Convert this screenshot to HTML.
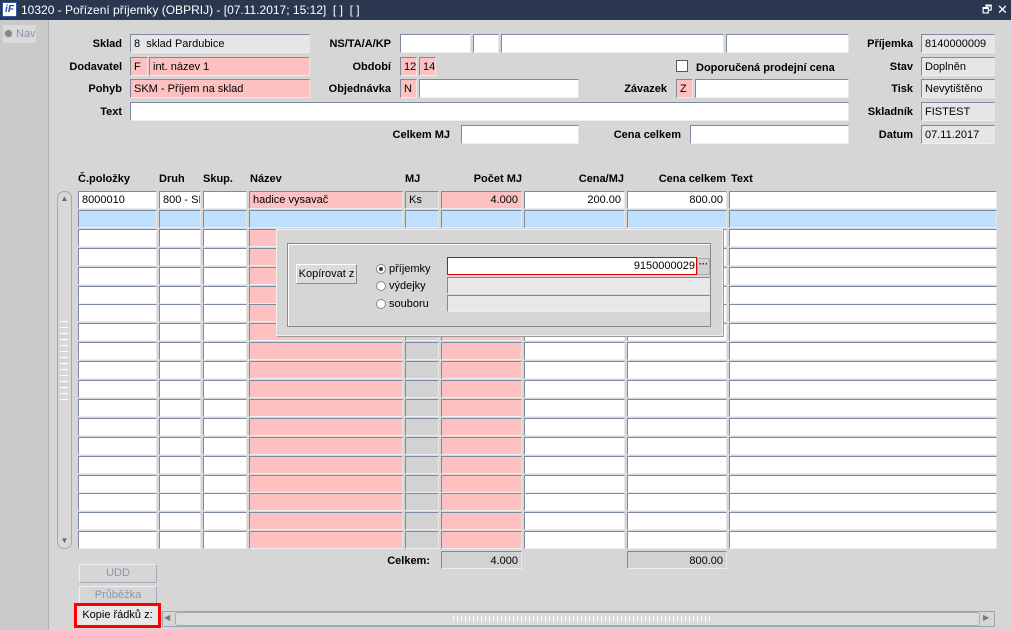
<!DOCTYPE html>
<html><head><meta charset="utf-8"><style>
*{box-sizing:border-box;margin:0;padding:0}
body{width:1011px;height:630px;overflow:hidden;background:#d6d6d6;font-family:"Liberation Sans",Arial,sans-serif;font-size:11px;color:#000;position:relative}
.a{position:absolute}
.t{position:absolute;height:20px;line-height:20px;white-space:nowrap}
.l{font-weight:bold;text-align:right}
.f{position:absolute;height:19px;line-height:18px;padding:0 3px;border:1px solid;border-color:#7d8aa0 #e6e6e6 #eeeeee #7d8aa0;background:#fff;white-space:nowrap;overflow:hidden;font-size:11px}
.g{background:#e6e6e6}.p{background:#fdc1c1}.b{background:#bfdfff}.r{text-align:right}.gr{background:#d2d2d2}
.h{position:absolute;top:172px;font-weight:bold;height:14px;line-height:14px}
</style></head><body>
<div class="a" style="left:0;top:0;width:1011px;height:20px;background:#2a374f"></div>
<div class="a" style="left:2px;top:2px;width:15px;height:15px;background:#fff;border:1px solid #3355aa;color:#1a3fb0;font-weight:bold;font-style:italic;font-size:10px;line-height:13px;text-align:center">iF</div>
<div class="t" style="left:21px;top:0;color:#fff;font-size:12px">10320 - Pořízení příjemky (OBPRIJ) - [07.11.2017; 15:12]&nbsp; [ ]&nbsp; [ ]</div>
<div class="t" style="left:982px;top:0;color:#fff;font-size:11px">🗗</div>
<div class="t" style="left:997px;top:0;color:#fff;font-size:13px">✕</div>
<div class="a" style="left:0;top:20px;width:49px;height:610px;background:#cacaca;border-right:1px solid #a8b0bc"></div>
<div class="a" style="left:3px;top:25px;width:33px;height:18px;background:#dadada"></div>
<div class="a" style="left:4px;top:29px;width:9px;height:9px;border-radius:50%;background:#888;border:1px solid #ccc"></div>
<div class="t" style="left:16px;top:24px;color:#8a94a4">Nav</div>

<div class="t l" style="left:60px;width:62px;top:34px">Sklad</div>
<div class="f g" style="left:130px;top:34px;width:180px">8&nbsp; sklad Pardubice</div>
<div class="t l" style="left:50px;width:72px;top:57px">Dodavatel</div>
<div class="f p" style="left:130px;top:57px;width:18px">F</div>
<div class="f p" style="left:149px;top:57px;width:161px">int. název 1</div>
<div class="t l" style="left:50px;width:72px;top:79px">Pohyb</div>
<div class="f p" style="left:130px;top:79px;width:180px">SKM - Příjem na sklad</div>
<div class="t l" style="left:50px;width:72px;top:102px">Text</div>
<div class="f" style="left:130px;top:102px;width:719px"></div>

<div class="t l" style="left:300px;width:91px;top:34px">NS/TA/A/KP</div>
<div class="f" style="left:400px;top:34px;width:71px"></div>
<div class="f" style="left:473px;top:34px;width:26px"></div>
<div class="f" style="left:501px;top:34px;width:223px"></div>
<div class="f" style="left:726px;top:34px;width:123px"></div>
<div class="t l" style="left:300px;width:91px;top:57px">Období</div>
<div class="f p" style="left:400px;top:57px;width:17px">12</div>
<div class="f p" style="left:419px;top:57px;width:17px">14</div>
<div class="t l" style="left:300px;width:91px;top:79px">Objednávka</div>
<div class="f p" style="left:400px;top:79px;width:17px">N</div>
<div class="f" style="left:419px;top:79px;width:160px"></div>
<div class="t l" style="left:300px;width:150px;top:125px">Celkem MJ</div>
<div class="f" style="left:461px;top:125px;width:118px"></div>

<div class="a" style="left:676px;top:60px;width:12px;height:12px;background:#fff;border:1px solid #555"></div>
<div class="t l" style="left:696px;top:58px">Doporučená prodejní cena</div>
<div class="t l" style="left:600px;width:67px;top:79px">Závazek</div>
<div class="f p" style="left:676px;top:79px;width:17px">Z</div>
<div class="f" style="left:695px;top:79px;width:154px"></div>
<div class="t l" style="left:590px;width:91px;top:125px">Cena celkem</div>
<div class="f" style="left:690px;top:125px;width:159px"></div>

<div class="t l" style="left:850px;width:63px;top:34px">Příjemka</div>
<div class="t l" style="left:850px;width:63px;top:57px">Stav</div>
<div class="t l" style="left:850px;width:63px;top:79px">Tisk</div>
<div class="t l" style="left:850px;width:63px;top:102px">Skladník</div>
<div class="t l" style="left:850px;width:63px;top:125px">Datum</div>
<div class="f g" style="left:921px;top:34px;width:74px">8140000009</div>
<div class="f g" style="left:921px;top:57px;width:74px">Doplněn</div>
<div class="f g" style="left:921px;top:79px;width:74px">Nevytištěno</div>
<div class="f g" style="left:921px;top:102px;width:74px">FISTEST</div>
<div class="f g" style="left:921px;top:125px;width:74px">07.11.2017</div>

<div class="h" style="left:78px">Č.položky</div>
<div class="h" style="left:159px">Druh</div>
<div class="h" style="left:203px">Skup.</div>
<div class="h" style="left:250px">Název</div>
<div class="h" style="left:405px">MJ</div>
<div class="h" style="left:441px;width:81px;text-align:right">Počet MJ</div>
<div class="h" style="left:524px;width:100px;text-align:right">Cena/MJ</div>
<div class="h" style="left:627px;width:99px;text-align:right">Cena celkem</div>
<div class="h" style="left:731px">Text</div>

<div id="grid"></div>

<div class="a" style="left:57px;top:191px;width:15px;height:358px;border:1px solid #a0a8b4;border-radius:7px;background:#d8d8d8"></div>
<div class="a" style="left:59px;top:193px;width:11px;height:11px;font-size:8px;line-height:11px;text-align:center;color:#667">▲</div>
<div class="a" style="left:59px;top:535px;width:11px;height:11px;font-size:8px;line-height:11px;text-align:center;color:#667">▼</div>
<div class="a" style="left:60px;top:318px;width:8px;height:84px;background:repeating-linear-gradient(#d8d8d8 0 3px,#fff 3px 4px,#d8d8d8 4px 6px)"></div>

<!-- popup -->
<div class="a" style="left:276px;top:229px;width:447px;height:107px;background:#d6d6d6;border:1px solid #eee;box-shadow:1px 1px 0 #999"></div>
<div class="a" style="left:287px;top:243px;width:424px;height:84px;border:1px solid #8a8a8a;box-shadow:inset 1px 1px 0 #fff"></div>
<div class="a" style="left:296px;top:264px;width:61px;height:20px;border:1px solid;border-color:#fff #7d8aa0 #7d8aa0 #fff;background:#dcdcdc;line-height:18px;text-align:center">Kopírovat z</div>
<div class="a" style="left:376px;top:264px;width:10px;height:10px;border-radius:50%;background:#fff;border:1px solid #888"><div style="margin:2px;width:4px;height:4px;border-radius:50%;background:#333"></div></div>
<div class="t" style="left:389px;top:259px">příjemky</div>
<div class="a" style="left:376px;top:281px;width:10px;height:10px;border-radius:50%;background:#fff;border:1px solid #888"></div>
<div class="t" style="left:389px;top:276px">výdejky</div>
<div class="a" style="left:376px;top:299px;width:10px;height:10px;border-radius:50%;background:#fff;border:1px solid #888"></div>
<div class="t" style="left:389px;top:294px">souboru</div>
<div class="f r" style="left:447px;top:257px;width:250px;height:18px;line-height:16px;border:1px solid #e00000;padding-right:1px">9150000029</div>
<div class="a" style="left:697px;top:258px;width:13px;height:17px;background:#d0d0d0;border:1px solid #aaa;font-size:9px;font-weight:bold;line-height:10px;text-align:center">···</div>
<div class="f" style="left:447px;top:277px;width:263px;height:17px;background:#e8e8e8"></div>
<div class="f" style="left:447px;top:295px;width:263px;height:17px;background:#e8e8e8"></div>

<div class="t l" style="left:360px;width:70px;top:551px">Celkem:</div>
<div class="f gr r" style="left:441px;top:551px;width:81px;height:18px">4.000</div>
<div class="f gr r" style="left:627px;top:551px;width:100px;height:18px">800.00</div>

<div class="a" style="left:79px;top:564px;width:78px;height:19px;border:1px solid;border-color:#eee #aab #aab #eee;text-align:center;line-height:17px;color:#8b95a8">UDD</div>
<div class="a" style="left:79px;top:586px;width:78px;height:19px;border:1px solid;border-color:#eee #aab #aab #eee;text-align:center;line-height:17px;color:#8b95a8">Průběžka</div>
<div class="a" style="left:74px;top:603px;width:87px;height:25px;border:3px solid #f00;background:#e8e8e8;text-align:center;line-height:19px">Kopie řádků z:</div>
<div class="a" style="left:162px;top:611px;width:833px;height:16px;border:1px solid #9aa4b4;background:#d6d6d6"></div>
<div class="a" style="left:175px;top:612px;width:805px;height:14px;border:1px solid #aab;border-radius:3px;background:#dcdcdc"></div>
<div class="a" style="left:453px;top:616px;width:260px;height:5px;background:repeating-linear-gradient(90deg,#fff 0 1px,transparent 1px 4px)"></div>
<div class="a" style="left:164px;top:613px;font-size:8px;color:#778">◀</div>
<div class="a" style="left:983px;top:613px;font-size:8px;color:#778">▶</div>

<script>
var cols=[[78,79],[159,42],[203,44],[249,154],[405,34],[441,81],[524,101],[627,100],[729,268]];
var h='';
for(var r=0;r<19;r++){var y=191+Math.round(r*18.9);
 for(var c=0;c<9;c++){var cl='f';
  if(r==1)cl+=' b';else if(c==3||c==5)cl+=' p';else if(c==4)cl+=' gr';
  var tx='';if(r==0){tx=['8000010','800 - SK','','hadice vysavač','Ks','4.000','200.00','800.00',''][c];if(c>=5&&c<=7)cl+=' r';}
  h+='<div class="'+cl+'" style="left:'+cols[c][0]+'px;top:'+y+'px;width:'+cols[c][1]+'px;height:18px;line-height:16px">'+tx+'</div>';}}
document.getElementById('grid').innerHTML=h;
</script>
</body></html>
